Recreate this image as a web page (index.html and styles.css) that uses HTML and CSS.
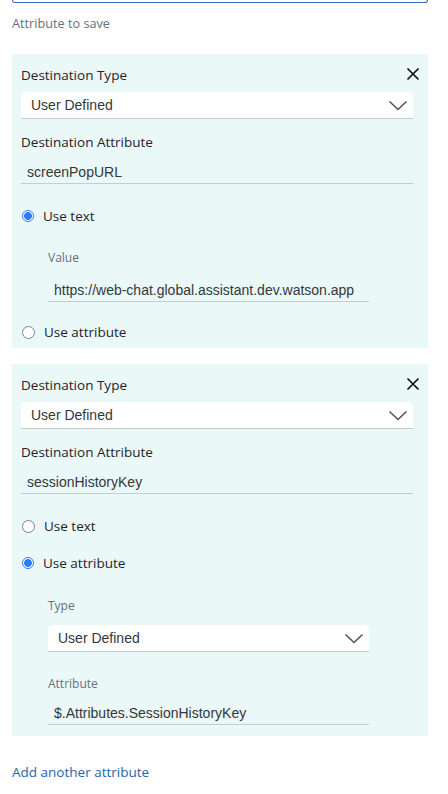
FILE: index.html
```html
<!DOCTYPE html>
<html>
<head>
<meta charset="utf-8">
<link rel="stylesheet" href="styles.css">
</head>
<body>
<div class="page">
  <div class="stub"></div>
  <div class="section-label">Attribute to save</div>

  <div class="card card-first">
    <div class="head">
      <span class="label">Destination Type</span>
      <svg class="close" width="14" height="14" viewBox="0 0 14 14"><path d="M1.5 1.5 L12.5 12.5 M12.5 1.5 L1.5 12.5" stroke="#111" stroke-width="1.7" fill="none"/></svg>
    </div>
    <div class="select">
      <span>User Defined</span>
      <svg class="chev" width="20" height="11" viewBox="0 0 20 11"><path d="M1.5 1.5 L10 9.5 L18.5 1.5" stroke="#555" stroke-width="1.6" fill="none"/></svg>
    </div>
    <div class="label gap14">Destination Attribute</div>
    <div class="input gap9">screenPopURL</div>
    <div class="radio-row gap22">
      <span class="radio on"></span><span class="radio-text">Use text</span>
    </div>
    <div class="sub">
      <div class="sub-label gap24">Value</div>
      <div class="input sub-input gap12">https://web-chat.global.assistant.dev.watson.app</div>
    </div>
    <div class="radio-row gap20">
      <span class="radio"></span><span class="radio-text">Use attribute</span>
    </div>
  </div>

  <div class="card card-second">
    <div class="head">
      <span class="label">Destination Type</span>
      <svg class="close" width="14" height="14" viewBox="0 0 14 14"><path d="M1.5 1.5 L12.5 12.5 M12.5 1.5 L1.5 12.5" stroke="#111" stroke-width="1.7" fill="none"/></svg>
    </div>
    <div class="select">
      <span>User Defined</span>
      <svg class="chev" width="20" height="11" viewBox="0 0 20 11"><path d="M1.5 1.5 L10 9.5 L18.5 1.5" stroke="#555" stroke-width="1.6" fill="none"/></svg>
    </div>
    <div class="label gap14">Destination Attribute</div>
    <div class="input gap9">sessionHistoryKey</div>
    <div class="radio-row gap22">
      <span class="radio"></span><span class="radio-text">Use text</span>
    </div>
    <div class="radio-row gap17">
      <span class="radio on"></span><span class="radio-text">Use attribute</span>
    </div>
    <div class="sub">
      <div class="sub-label gap25">Type</div>
      <div class="select sub-select gap11">
        <span>User Defined</span>
        <svg class="chev" width="20" height="11" viewBox="0 0 20 11"><path d="M1.5 1.5 L10 9.5 L18.5 1.5" stroke="#555" stroke-width="1.6" fill="none"/></svg>
      </div>
      <div class="sub-label gap24">Attribute</div>
      <div class="input sub-input gap9">$.Attributes.SessionHistoryKey</div>
    </div>
  </div>

  <a class="add-link" href="#">Add another attribute</a>
</div>
</body>
</html>
```

FILE: styles.css
```css
html, body {
  margin: 0;
  padding: 0;
  background: #ffffff;
}

.page {
  padding: 0 20px 0 12px;
  display: flex;
  flex-direction: column;
  font-family: "Open Sans", "Noto Sans", sans-serif;
  color: #1f2328;
}

.stub {
  height: 2px;
  border: 1.5px solid #3b6fbf;
  border-top: none;
  border-radius: 0 0 3px 3px;
}

.section-label {
  margin-top: 11px;
  height: 18px;
  line-height: 18px;
  font-size: 12.7px;
  color: #687078;
}

.card {
  margin-top: 22px;
  background: #ebf8f8;
  padding: 11px 15px 6px 9px;
  display: flex;
  flex-direction: column;
}

.card-second {
  margin-top: 16px;
  padding-bottom: 11px;
}

.head {
  height: 20px;
  display: flex;
  align-items: center;
  justify-content: space-between;
}

.close {
  margin-right: -7px;
  margin-top: -3px;
}

.label {
  font-size: 13.5px;
  line-height: 18px;
  height: 18px;
  color: #1f2328;
}

.select {
  margin-top: 7px;
  height: 26px;
  background: #ffffff;
  border-bottom: 1px solid #c9cccf;
  border-radius: 5px 5px 0 0;
  display: flex;
  align-items: center;
  justify-content: space-between;
  padding: 0 5px 0 10px;
  font-family: "Liberation Sans", Arial, sans-serif;
  font-size: 14px;
  color: #33373c;
}

.input {
  height: 23px;
  border-bottom: 1px solid #c9cccf;
  display: flex;
  align-items: center;
  padding: 0 6px;
  font-family: "Liberation Sans", Arial, sans-serif;
  font-size: 14px;
  color: #33373c;
}

.radio-row {
  height: 20px;
  display: flex;
  align-items: center;
}

.radio {
  width: 11px;
  height: 11px;
  border-radius: 50%;
  border: 1px solid #7d8186;
  background: #ffffff;
  margin-left: 1px;
}

.radio.on {
  border: 1.5px solid #2d7cf7;
  width: 10px;
  height: 10px;
  background: radial-gradient(circle, #2d7cf7 0 3.6px, #ffffff 4.2px);
}

.radio-text {
  margin-left: 9px;
  font-size: 13.5px;
  color: #1f2328;
}

.sub {
  padding-left: 27px;
  padding-right: 44px;
  display: flex;
  flex-direction: column;
}

.sub-label {
  height: 16px;
  line-height: 16px;
  font-size: 12px;
  color: #687078;
}

.sub-select {
  padding-left: 10px;
}

.gap9 { margin-top: 9px; }
.gap11 { margin-top: 11px; }
.gap12 { margin-top: 12px; }
.gap14 { margin-top: 14px; }
.gap17 { margin-top: 17px; }
.gap20 { margin-top: 20px; }
.gap22 { margin-top: 22px; }
.gap24 { margin-top: 24px; }
.gap25 { margin-top: 25px; }

.add-link {
  margin-top: 26px;
  height: 20px;
  line-height: 20px;
  font-size: 13.5px;
  color: #1d65ad;
  text-decoration: none;
  align-self: flex-start;
}
```
